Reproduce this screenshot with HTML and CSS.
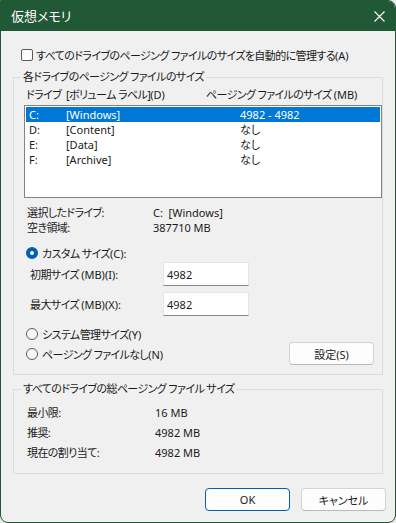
FILE: index.html
```html
<!DOCTYPE html>
<html lang="ja">

<head>
    <meta charset="utf-8">
    <title>仮想メモリ</title>
    <link rel="stylesheet" href="styles.css">
</head>

<body>
    <div class="window">
        <div class="titlebar">
            <span class="title">仮想メモリ</span>
            <svg class="close" width="11" height="11" viewBox="0 0 11 11">
                <path d="M0.5 0.5 L10.5 10.5 M10.5 0.5 L0.5 10.5" stroke="#fff" stroke-width="1.1" fill="none" />
            </svg>
        </div>

        <div class="client">
            <label class="check-row">
                <span class="checkbox"></span>
                <span>すべてのドライブのページング ファイルのサイズを自動的に管理する<span class="lat">(A)</span></span>
            </label>

            <fieldset class="group group-drives">
                <legend>各ドライブのページング ファイルのサイズ</legend>

                <div class="list-head">
                    <span>ドライブ</span>
                    <span>[ボリューム ラベル]<span class="lat">(D)</span></span>
                    <span>ページング ファイルのサイズ <span class="lat">(MB)</span></span>
                </div>

                <div class="listbox lat">
                    <div class="list-row selected">
                        <span>C:</span><span>[Windows]</span><span>4982 - 4982</span>
                    </div>
                    <div class="list-row">
                        <span>D:</span><span>[Content]</span><span>なし</span>
                    </div>
                    <div class="list-row">
                        <span>E:</span><span>[Data]</span><span>なし</span>
                    </div>
                    <div class="list-row">
                        <span>F:</span><span>[Archive]</span><span>なし</span>
                    </div>
                </div>

                <div class="info">
                    <div class="info-row"><span>選択したドライブ:</span><span class="lat">C:&nbsp; [Windows]</span></div>
                    <div class="info-row"><span>空き領域:</span><span class="lat">387710 MB</span></div>
                </div>

                <label class="radio-row custom">
                    <span class="radio checked"></span>
                    <span>カスタム サイズ<span class="lat">(C):</span></span>
                </label>

                <div class="size-row first">
                    <span class="size-label">初期サイズ <span class="lat">(MB)(I):</span></span>
                    <input class="size-input lat" type="text" value="4982">
                </div>
                <div class="size-row">
                    <span class="size-label">最大サイズ <span class="lat">(MB)(X):</span></span>
                    <input class="size-input lat" type="text" value="4982">
                </div>

                <div class="bottom-row">
                    <div class="radios">
                        <label class="radio-row">
                            <span class="radio"></span>
                            <span>システム管理サイズ<span class="lat">(Y)</span></span>
                        </label>
                        <label class="radio-row">
                            <span class="radio"></span>
                            <span>ページング ファイルなし<span class="lat">(N)</span></span>
                        </label>
                    </div>
                    <button class="button set-button">設定<span class="lat">(S)</span></button>
                </div>
            </fieldset>

            <fieldset class="group group-total">
                <legend>すべてのドライブの総ページング ファイル サイズ</legend>
                <div class="total-row"><span>最小限:</span><span class="lat">16 MB</span></div>
                <div class="total-row"><span>推奨:</span><span class="lat">4982 MB</span></div>
                <div class="total-row"><span>現在の割り当て:</span><span class="lat">4982 MB</span></div>
            </fieldset>

            <div class="actions">
                <button class="button default lat">OK</button>
                <button class="button">キャンセル</button>
            </div>
        </div>
    </div>
</body>

</html>
```

FILE: styles.css
```css
html,
body {
    margin: 0;
    background: #e9e9e9;
}

body {
    font-family: "Noto Sans", "Noto Sans CJK JP", sans-serif;
    font-size: 11px;
    letter-spacing: -0.6px;
    font-feature-settings: "palt";
    color: #1a1a1a;
}

/* latin runs keep normal spacing */
.lat {
    letter-spacing: 0;
}

.window {
    box-sizing: border-box;
    width: 396px;
    height: 523px;
    border: 1px solid #215835;
    border-radius: 0 8px 8px 8px;
    background: #f0f0f0;
    overflow: hidden;
    display: flex;
    flex-direction: column;
}

.titlebar {
    height: 30px;
    flex: none;
    background: #215835;
    color: #fff;
    display: flex;
    align-items: center;
    justify-content: space-between;
    padding: 0 10px 0 10px;
}

.title {
    font-size: 13px;
    line-height: 16px;
    letter-spacing: 0;
}

.close {
    display: block;
}

.client {
    flex: 1;
    padding: 0 12px;
    display: flex;
    flex-direction: column;
}

/* checkbox */
.check-row {
    display: flex;
    align-items: center;
    height: 20px;
    margin-top: 14px;
    padding-left: 8px;
    gap: 3px;
    white-space: nowrap;
}

.checkbox {
    flex: none;
    box-sizing: border-box;
    width: 12px;
    height: 12px;
    border: 1px solid #5b5b5b;
    border-radius: 2px;
    background: #fbfbfb;
}

/* group boxes */
.group {
    margin: 5px 0 0 0;
    padding: 0;
    border: 1px solid #dcdcdc;
    min-width: 0;
}

.group legend {
    margin-left: 7px;
    padding: 0 2px;
    line-height: 14px;
}

.group-drives {
    padding-bottom: 9px;
}

.group-total {
    margin-top: 7px;
    padding-bottom: 10px;
}

/* drive list */
.list-head {
    display: grid;
    grid-template-columns: 40px 140px 1fr;
    height: 14px;
    line-height: 14px;
    margin-top: 4px;
    padding-left: 12px;
    white-space: nowrap;
}

.listbox {
    box-sizing: border-box;
    height: 93px;
    margin: 3px 0 0 10px;
    border: 1px solid #838383;
    background: #fff;
    padding: 1px;
}

.list-row {
    display: grid;
    grid-template-columns: 37px 174px 1fr;
    height: 15px;
    line-height: 15px;
    padding-left: 3px;
}

.list-row.selected {
    background: #0078d7;
    color: #fff;
}

/* selected drive info */
.info {
    margin-top: 7px;
    padding-left: 13px;
}

.info-row {
    display: grid;
    grid-template-columns: 126px 1fr;
    height: 15px;
    line-height: 15px;
}

/* radios */
.radio-row {
    display: flex;
    align-items: center;
    gap: 4px;
    height: 20px;
    padding-left: 12px;
}

.radio-row.custom {
    margin-top: 8px;
}

.radio {
    flex: none;
    box-sizing: border-box;
    width: 12px;
    height: 12px;
    border-radius: 50%;
    border: 1px solid #5b5b5b;
    background: #f7f7f7;
}

.radio.checked {
    border: 4px solid #005fb8;
    background: #fff;
}

/* size inputs */
.size-row {
    display: flex;
    align-items: center;
    padding-left: 16px;
    margin-top: 6px;
}

.size-row.first {
    margin-top: -1px;
}

.size-label {
    width: 133px;
}

.size-input {
    box-sizing: border-box;
    width: 86px;
    height: 24px;
    margin: 0;
    padding: 0 3px;
    border: 1px solid #e5e5e5;
    border-bottom: 1px solid #868686;
    background: #fff;
    font: inherit;
    color: #1a1a1a;
    outline: none;
}

.bottom-row {
    display: flex;
    justify-content: space-between;
    margin-top: 8px;
}

.set-button {
    margin: 18px 8px 0 0;
}

/* totals */
.total-row {
    display: grid;
    grid-template-columns: 128px 1fr;
    height: 20px;
    line-height: 20px;
    padding-left: 13px;
}

.total-row:first-of-type {
    margin-top: 7px;
}

/* buttons */
.button {
    box-sizing: border-box;
    width: 85px;
    height: 23px;
    padding: 0;
    border: 1px solid #d3d3d3;
    border-bottom-color: #b9b9b9;
    border-radius: 4px;
    background: #fdfdfd;
    font: inherit;
    color: #1a1a1a;
}

.button.default {
    border: 1px solid #005fb8;
}

.actions {
    display: flex;
    justify-content: flex-end;
    gap: 11px;
    margin: 14px -3px 0 0;
}
```
